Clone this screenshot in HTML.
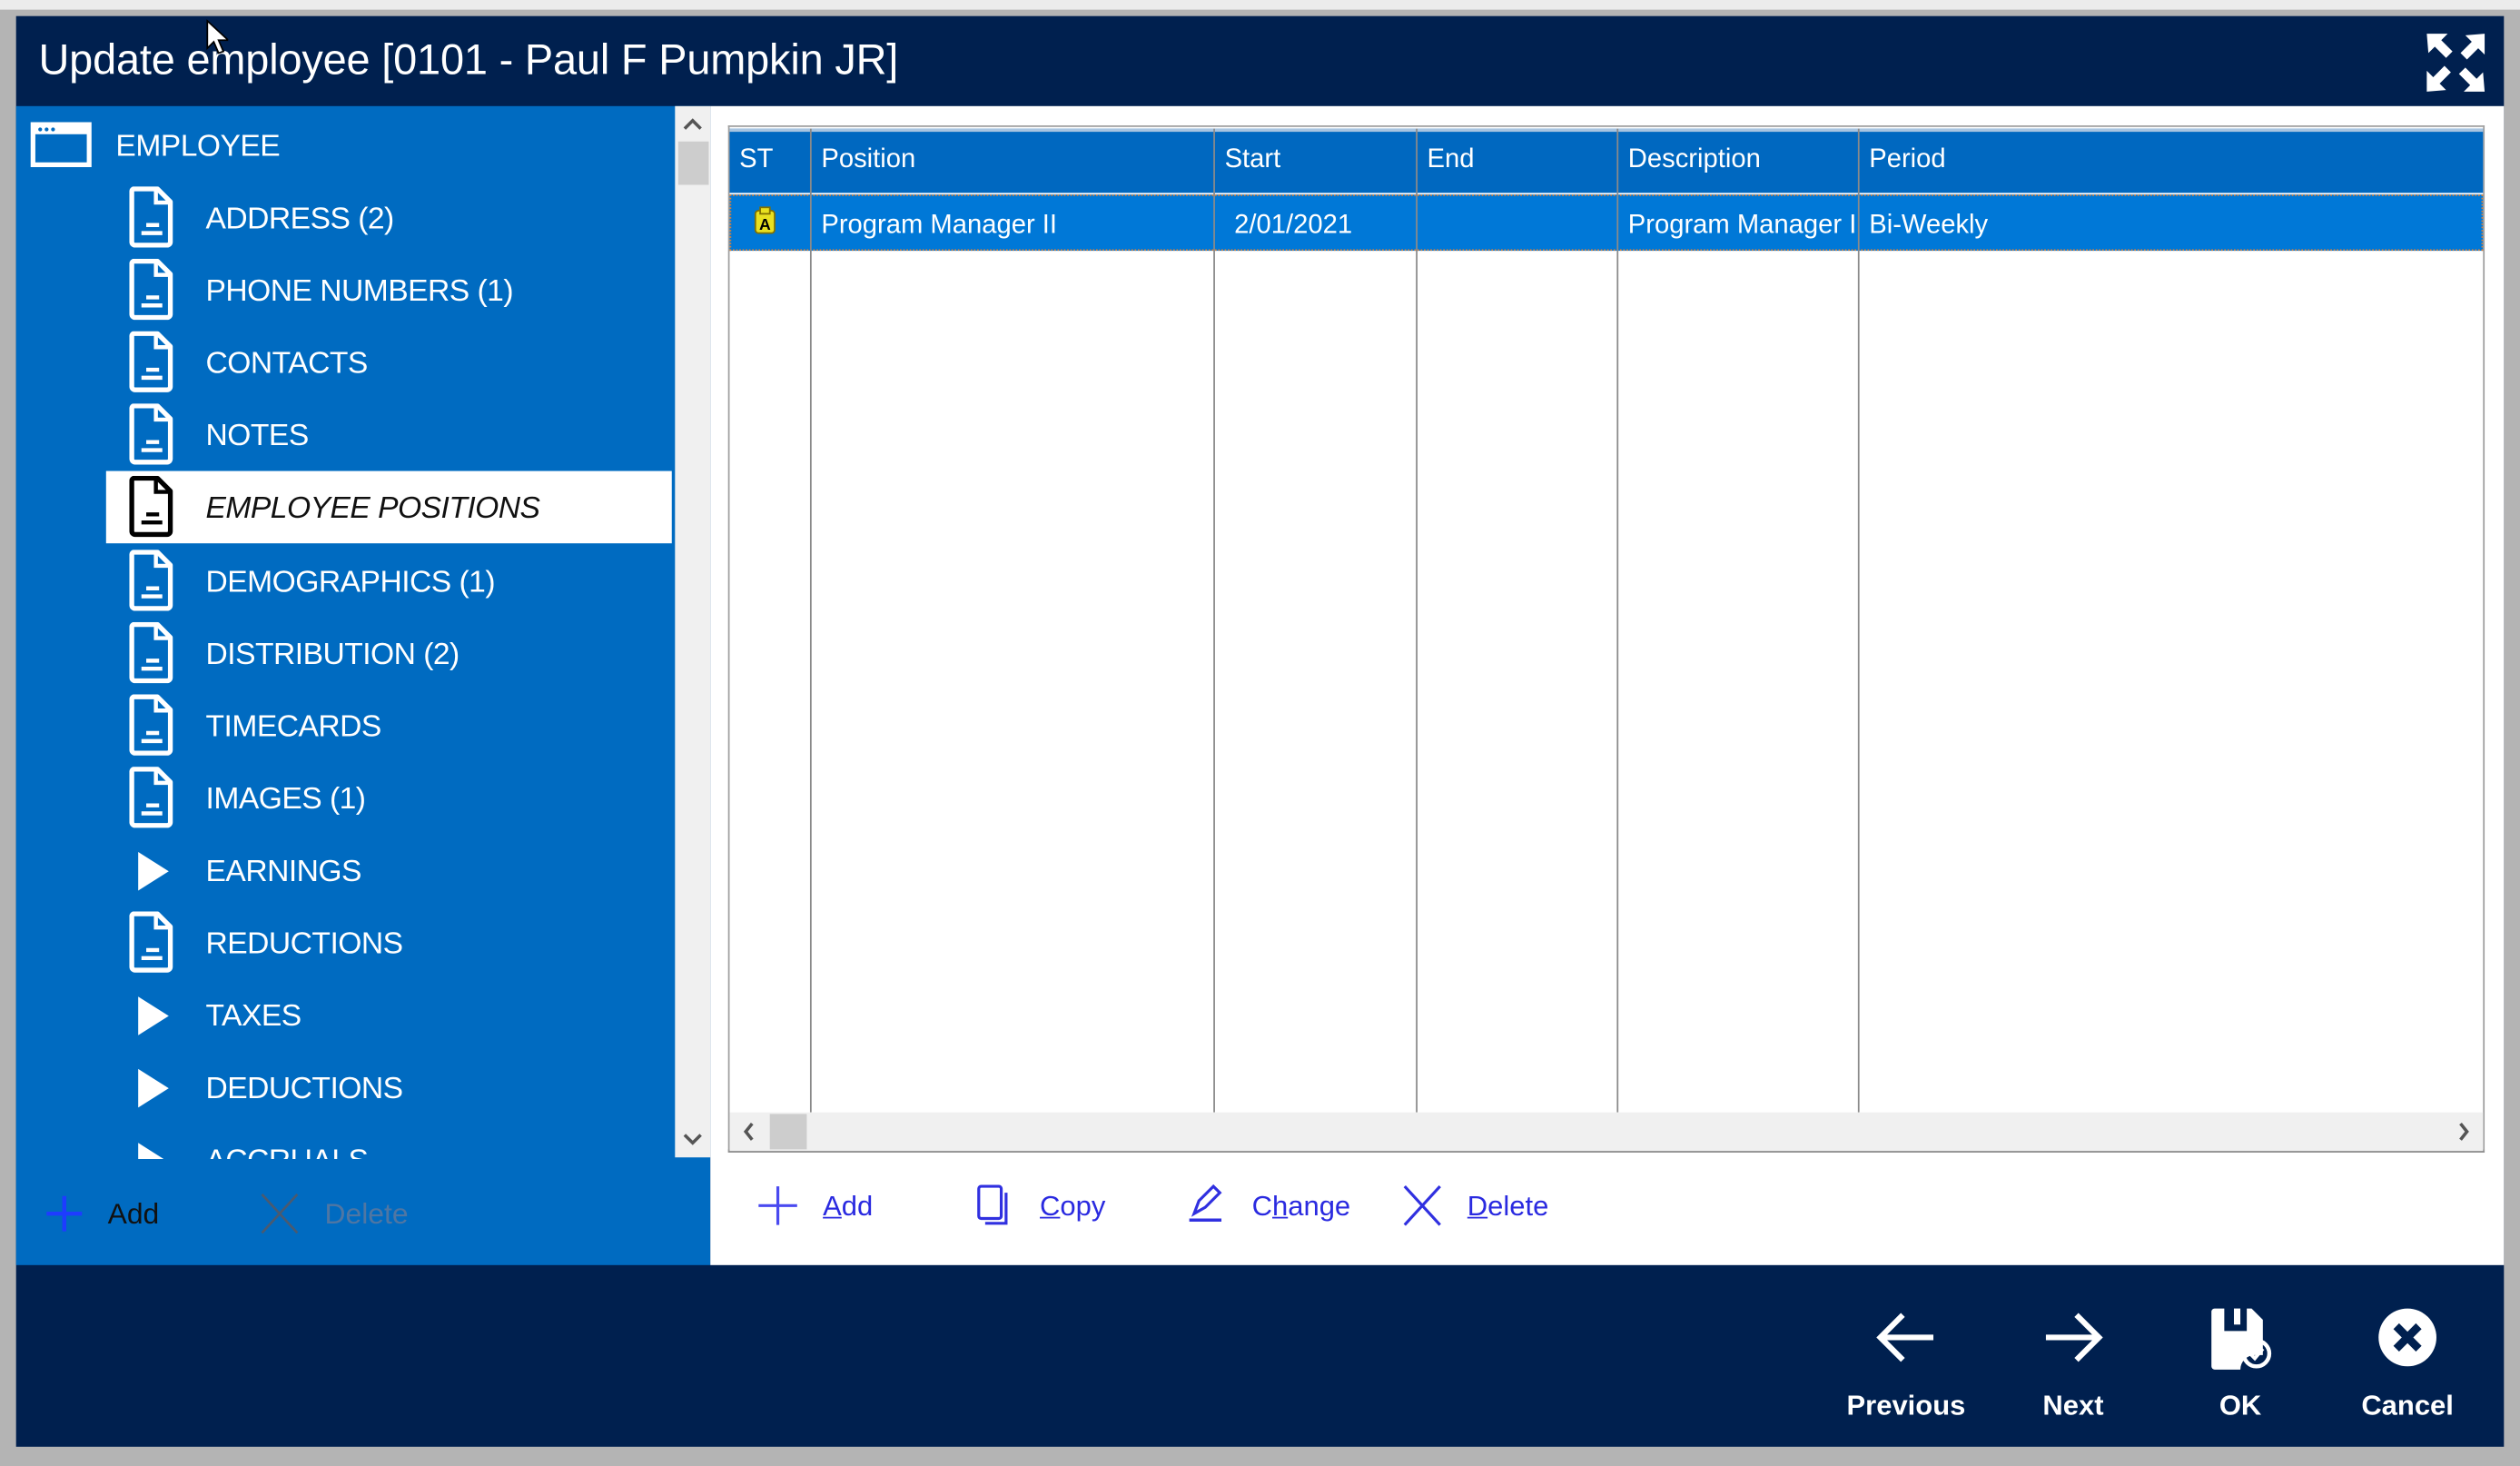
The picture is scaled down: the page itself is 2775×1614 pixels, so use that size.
<!DOCTYPE html>
<html><head><meta charset="utf-8">
<style>
html,body{margin:0;padding:0;background:#f0f0f0;overflow:hidden;width:2775px;height:1613px}
#w{position:absolute;left:0;top:0;width:1568px;height:912px;transform:scale(1.76977);transform-origin:0 0;background:#b4b4b4;font-family:"Liberation Sans",sans-serif}
.a{position:absolute}
.nav{background:#00204f}
.blue{background:#006bc1}
.ti{color:#fff;font-size:19px;letter-spacing:-0.3px;white-space:nowrap;margin-top:2px}
.hd{color:#fff;font-size:16.5px;white-space:nowrap;margin-top:2px}
.act{color:#2a2ae0;font-size:17.5px;white-space:nowrap}
.act u{text-decoration-thickness:1px}
.fb{color:#fff;font-size:17.5px;font-weight:bold;white-space:nowrap;text-align:center;width:100px}
.vl{position:absolute;top:80px;width:1px;height:612px;background:#8a8a8a}
</style></head><body><div id="w">
<div class="a" style="left:0;top:0;width:1568px;height:6px;background:#ececec"></div>
<div class="a nav" style="left:10px;top:10px;width:1548px;height:890px"></div>
<div class="a" style="left:24px;top:22px;color:#fff;font-size:26.5px;white-space:nowrap;letter-spacing:-0.1px">Update employee [0101 - Paul F Pumpkin JR]</div>
<svg class="a" style="left:1508px;top:19px" width="40" height="40" viewBox="0 0 40 40" fill="#fff">
<path d="M2 2h13l-4 4 7 7-4 4-7-7-4 4z"/><path d="M38 2v13l-4-4-7 7-4-4 7-7-4-4z"/><path d="M2 38v-13l4 4 7-7 4 4-7 7 4 4z"/><path d="M38 38h-13l4-4-7-7 4-4 7 7 4-4z"/>
</svg>
<div class="a blue" style="left:10px;top:66px;width:432px;height:721px"></div>
<div class="a" style="left:420px;top:66px;width:22px;height:654px;background:#f0f0f0"></div>
<div class="a" style="left:422px;top:88px;width:19px;height:27px;background:#cdcdcd"></div>
<svg class="a" style="left:424px;top:71px" width="14" height="12"><path d="M2 9l5-5 5 5" stroke="#555" stroke-width="2" fill="none"/></svg>
<svg class="a" style="left:424px;top:703px" width="14" height="12"><path d="M2 3l5 5 5-5" stroke="#555" stroke-width="2" fill="none"/></svg>
<svg class="a" style="left:19px;top:76px" width="38" height="28"><rect x="1.5" y="1.5" width="35" height="25" fill="none" stroke="#fff" stroke-width="3"/><rect x="1.5" y="1.5" width="35" height="6" fill="#fff"/><circle cx="6" cy="4.5" r="1.2" fill="#006bc1"/><circle cx="10" cy="4.5" r="1.2" fill="#006bc1"/><circle cx="14" cy="4.5" r="1.2" fill="#006bc1"/></svg>
<div class="a ti" style="left:72px;top:79px">EMPLOYEE</div>
<div class="a" style="left:66px;top:293px;width:352px;height:45px;background:#fff"></div>
<svg width="0" height="0" style="position:absolute"><defs>
<g id="doc"><path d="M3 1.5h15l8 8v25a2 2 0 0 1-2 2H4a2 2 0 0 1-2-2V3.5a2 2 0 0 1 1-2z" fill="none" stroke-width="3" stroke-linejoin="round"/><path d="M17 2v8h8" fill="none" stroke-width="2.5"/><path d="M11 24h8M8 29h13" stroke-width="2.5"/></g>
</defs></svg>
<div class="a" style="left:0;top:0">
<svg class="a" style="left:80px;top:116px" width="30" height="40" stroke="#fff"><use href="#doc"/></svg>
<div class="a ti" style="left:128px;top:124px">ADDRESS (2)</div>
<svg class="a" style="left:80px;top:161px" width="30" height="40" stroke="#fff"><use href="#doc"/></svg>
<div class="a ti" style="left:128px;top:169px">PHONE NUMBERS (1)</div>
<svg class="a" style="left:80px;top:206px" width="30" height="40" stroke="#fff"><use href="#doc"/></svg>
<div class="a ti" style="left:128px;top:214px">CONTACTS</div>
<svg class="a" style="left:80px;top:251px" width="30" height="40" stroke="#fff"><use href="#doc"/></svg>
<div class="a ti" style="left:128px;top:259px">NOTES</div>
<svg class="a" style="left:80px;top:296px" width="30" height="40" stroke="#000"><use href="#doc"/></svg>
<div class="a ti" style="left:128px;top:304px;color:#111;font-style:italic">EMPLOYEE POSITIONS</div>
<svg class="a" style="left:80px;top:342px" width="30" height="40" stroke="#fff"><use href="#doc"/></svg>
<div class="a ti" style="left:128px;top:350px">DEMOGRAPHICS (1)</div>
<svg class="a" style="left:80px;top:387px" width="30" height="40" stroke="#fff"><use href="#doc"/></svg>
<div class="a ti" style="left:128px;top:395px">DISTRIBUTION (2)</div>
<svg class="a" style="left:80px;top:432px" width="30" height="40" stroke="#fff"><use href="#doc"/></svg>
<div class="a ti" style="left:128px;top:440px">TIMECARDS</div>
<svg class="a" style="left:80px;top:477px" width="30" height="40" stroke="#fff"><use href="#doc"/></svg>
<div class="a ti" style="left:128px;top:485px">IMAGES (1)</div>
<svg class="a" style="left:84px;top:529px" width="22" height="26"><path d="M2 1l19 12L2 25z" fill="#fff"/></svg>
<div class="a ti" style="left:128px;top:530px">EARNINGS</div>
<svg class="a" style="left:80px;top:567px" width="30" height="40" stroke="#fff"><use href="#doc"/></svg>
<div class="a ti" style="left:128px;top:575px">REDUCTIONS</div>
<svg class="a" style="left:84px;top:619px" width="22" height="26"><path d="M2 1l19 12L2 25z" fill="#fff"/></svg>
<div class="a ti" style="left:128px;top:620px">TAXES</div>
<svg class="a" style="left:84px;top:664px" width="22" height="26"><path d="M2 1l19 12L2 25z" fill="#fff"/></svg>
<div class="a ti" style="left:128px;top:665px">DEDUCTIONS</div>
<div class="a" style="left:10px;top:700px;width:410px;height:21px;overflow:hidden">
<svg class="a" style="left:74px;top:10px" width="22" height="26"><path d="M2 1l19 12L2 25z" fill="#fff"/></svg>
<div class="a ti" style="left:118px;top:10px">ACCRUALS</div>
</div>
</div>
<svg class="a" style="left:28px;top:743px" width="24" height="24"><path d="M12 1v22M1 12h22" stroke="#1e3cff" stroke-width="2.5"/></svg>
<div class="a" style="left:67px;top:745px;font-size:18px;color:#111">Add</div>
<svg class="a" style="left:161px;top:741px" width="26" height="28"><path d="M2 2l22 24M24 2L2 26" stroke="#4a5a70" stroke-width="1.5"/></svg>
<div class="a" style="left:202px;top:745px;font-size:18px;color:#4f76a3">Delete</div>
<div class="a" style="left:442px;top:66px;width:1116px;height:721px;background:#fff"></div>
<div class="a" style="left:453px;top:78px;width:1093px;height:639px;border:1px solid #a0a0a0;border-bottom:2px solid #8a8a8a;box-sizing:border-box;background:#fff"></div>
<div class="a" style="left:454px;top:80px;width:1091px;height:40px;background:#0068c0;border-top:2px solid #a8c4e0;box-sizing:border-box"></div>
<div class="a" style="left:454px;top:121px;width:1091px;height:35px;background:#0078d7;border:1px dotted #d08040;box-sizing:border-box"></div>
<div class="vl" style="left:504px"></div><div class="vl" style="left:755px"></div><div class="vl" style="left:881px"></div><div class="vl" style="left:1006px"></div><div class="vl" style="left:1156px"></div>
<div class="a hd" style="left:460px;top:88px">ST</div>
<div class="a hd" style="left:511px;top:88px">Position</div>
<div class="a hd" style="left:762px;top:88px">Start</div>
<div class="a hd" style="left:888px;top:88px">End</div>
<div class="a hd" style="left:1013px;top:88px">Description</div>
<div class="a hd" style="left:1163px;top:88px">Period</div>
<svg class="a" style="left:468px;top:128px" width="16" height="18"><rect x="2" y="3" width="12" height="14" rx="2" fill="#e8e020" stroke="#807000"/><rect x="5" y="1" width="6" height="4" fill="#e8e020" stroke="#807000"/><text x="8" y="15" font-size="10" text-anchor="middle" font-family="Liberation Sans" font-weight="bold" fill="#000">A</text></svg>
<div class="a hd" style="left:511px;top:129px">Program Manager II</div>
<div class="a hd" style="left:768px;top:129px">2/01/2021</div>
<div class="a" style="left:1007px;top:121px;width:149px;height:35px;overflow:hidden"><div class="a hd" style="left:6px;top:8px">Program Manager II</div></div>
<div class="a hd" style="left:1163px;top:129px">Bi-Weekly</div>
<div class="a" style="left:454px;top:692px;width:1091px;height:24px;background:#f0f0f0"></div>
<div class="a" style="left:479px;top:693px;width:23px;height:22px;background:#cdcdcd"></div>
<svg class="a" style="left:460px;top:697px" width="12" height="14"><path d="M8 2L4 7l4 5" stroke="#555" stroke-width="2" fill="none"/></svg>
<svg class="a" style="left:1527px;top:697px" width="12" height="14"><path d="M4 2l4 5-4 5" stroke="#555" stroke-width="2" fill="none"/></svg>
<svg class="a" style="left:471px;top:737px" width="26" height="26"><path d="M13 1v24M1 13h24" stroke="#4a4af0" stroke-width="1.8"/></svg>
<div class="a act" style="left:512px;top:740px"><u>A</u>dd</div>
<svg class="a" style="left:606px;top:736px" width="24" height="28"><rect x="3" y="2" width="14" height="20" rx="1.5" fill="none" stroke="#3030e0" stroke-width="1.8"/><path d="M7 25h13V6" fill="none" stroke="#3030e0" stroke-width="1.8"/></svg>
<div class="a act" style="left:647px;top:740px"><u>C</u>opy</div>
<svg class="a" style="left:738px;top:736px" width="26" height="26"><path d="M5 19l3-8 9-9 4 4-9 9z" fill="none" stroke="#3030e0" stroke-width="1.8"/><path d="M2 23h20" stroke="#3030e0" stroke-width="2"/></svg>
<div class="a act" style="left:779px;top:740px">C<u>h</u>ange</div>
<svg class="a" style="left:872px;top:736px" width="26" height="28"><path d="M2 2l22 24M24 2L2 26" stroke="#3030e0" stroke-width="1.8"/></svg>
<div class="a act" style="left:913px;top:740px"><u>D</u>elete</div>
<svg class="a" style="left:1167px;top:816px" width="38" height="32"><path d="M3 16h33M17 2L3 16l14 14" stroke="#fff" stroke-width="3.5" fill="none"/></svg>
<div class="a fb" style="left:1136px;top:864px">Previous</div>
<svg class="a" style="left:1271px;top:816px" width="38" height="32"><path d="M2 16h33M21 2l14 14-14 14" stroke="#fff" stroke-width="3.5" fill="none"/></svg>
<div class="a fb" style="left:1240px;top:864px">Next</div>
<svg class="a" style="left:1374px;top:813px" width="42" height="40"><path d="M2 3a2 2 0 0 1 2-2h6v14h14V1h3l7 7v22h-5a9 9 0 0 0-9 9H4a2 2 0 0 1-2-2z" fill="#fff"/><rect x="16" y="1" width="4" height="10" fill="#fff"/><circle cx="30" cy="29" r="8" fill="none" stroke="#fff" stroke-width="2.5"/><path d="M26 29l3 3 5-6" stroke="#fff" stroke-width="2.2" fill="none"/></svg>
<div class="a fb" style="left:1344px;top:864px">OK</div>
<svg class="a" style="left:1479px;top:813px" width="38" height="38"><circle cx="19" cy="19" r="18" fill="#fff"/><path d="M12 12l14 14M26 12L12 26" stroke="#00204f" stroke-width="5"/></svg>
<div class="a fb" style="left:1448px;top:864px">Cancel</div>
<div class="a" style="left:0;top:902px;width:1568px;height:10px;background:#b4b4b4"></div>
<svg class="a" style="left:128px;top:12px" width="14" height="22"><path d="M1 1v17l4-4 3 7 3-1-3-7h6z" fill="#fff" stroke="#000" stroke-width="1"/></svg>
</div></body></html>
